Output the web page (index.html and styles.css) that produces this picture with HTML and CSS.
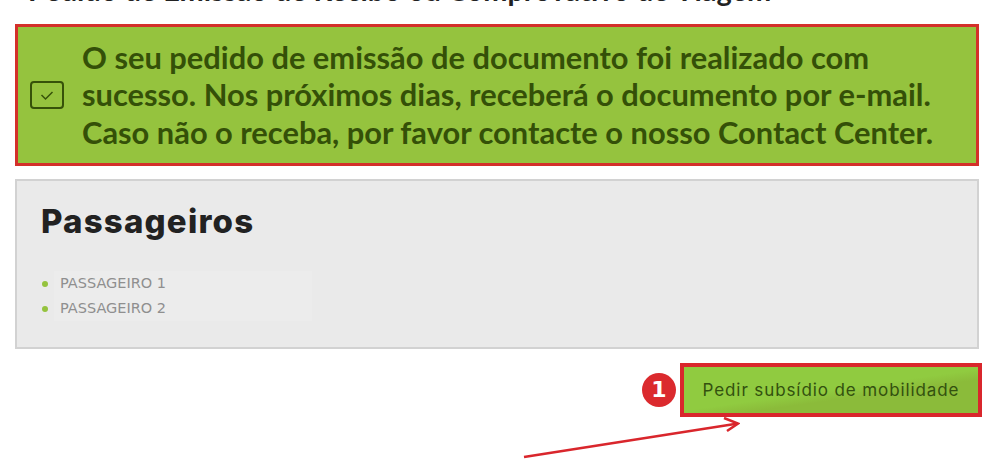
FILE: index.html
```html
<!DOCTYPE html>
<html lang="pt">
<head>
<meta charset="utf-8">
<title>Pedido de emissão</title>
<link rel="stylesheet" href="styles.css">
</head>
<body>
<main class="page">
  <h2 class="cut-title">Pedido de Emissão de Recibo ou Comprovativo de Viagem</h2>
  <div class="alert">
    <svg class="alert-icon" viewBox="0 0 34 28" width="34" height="28" aria-hidden="true">
      <rect x="1" y="1" width="32" height="26" rx="3" fill="none" stroke="#365209" stroke-width="2"/>
      <path d="M11.500 14l4 4 7-7" fill="none" stroke="#365209" stroke-width="1.500"/>
    </svg>
    <p class="alert-text">O seu pedido de emissão de documento foi realizado com sucesso. Nos próximos dias, receberá o documento por e-mail. Caso não o receba, por favor contacte o nosso Contact Center.</p>
  </div>
  <section class="panel">
    <h1 class="panel-title">Passageiros</h1>
    <ul class="passengers">
      <li>PASSAGEIRO 1</li>
      <li>PASSAGEIRO 2</li>
    </ul>
  </section>
  <div class="actions">
    <span class="badge">1</span>
    <a class="button">Pedir subsídio de mobilidade</a>
  </div>
  <svg class="arrow" viewBox="0 0 220 46" width="220" height="46" aria-hidden="true">
    <path d="M4 43L218 9.500" fill="none" stroke="#d9262c" stroke-width="2.500"/>
    <path d="M204 4L218 9.500L207 17" fill="none" stroke="#d9262c" stroke-width="2.500"/>
  </svg>
</main>
</body>
</html>
```
FILE: styles.css
```css
html, body { margin: 0; padding: 0; background: #fff; }
body { width: 1000px; height: 475px; overflow: hidden; }
.page { padding: 0 21px 0 15px; height: 475px; box-sizing: border-box; position: relative; overflow: hidden; }
.cut-title { margin: -23px 0 0 13px; height: 47px; font: 700 28.900px/26px "Lato", sans-serif; color: #222; white-space: nowrap; }
.alert { display: flex; align-items: center; height: 142px; box-sizing: border-box; border: 3px solid #d3302a; background: #95c33e; padding: 0 20px 0 12px; gap: 18px; }
.alert-icon { flex: none; width: 34px; height: 28px; margin-top: -1px; }
.alert-text { margin: 0; font: 700 30.850px/37.500px "Lato", sans-serif; color: #345008; }
.panel { position: relative; z-index: 0; margin-top: 13px; height: 170px; box-sizing: border-box; border: 2px solid #d2d2d2; background: #eaeaea; padding: 18px 24px; }
.panel-title { margin: 0; font: 800 33px/44px "Inter", sans-serif; letter-spacing: 1.200px; color: #222; }
.passengers { list-style: none; margin: 28px 0 0; padding: 0; position: relative; width: 271px; }
.passengers li { position: relative; padding-left: 19px; font: 14.500px/25px "DejaVu Sans", sans-serif; color: #8f8f8f; }
.passengers li::before { content: ""; position: absolute; left: 1px; top: 10px; width: 6px; height: 6px; border-radius: 50%; background: #95c33e; }
.passengers li::after { content: ""; position: absolute; left: 13px; right: 0; top: 0; bottom: 0; background: #ececec; z-index: -1; }
.actions { display: flex; justify-content: flex-end; align-items: center; gap: 4px; margin-top: 14px; margin-right: -3px; }
.badge { width: 34px; height: 34px; border-radius: 50%; background: #db2a2e; color: #fff; font: 700 22px/34px "DejaVu Sans", sans-serif; text-align: center; }
.button { display: block; box-sizing: border-box; width: 302px; height: 54px; border: 4px solid #d9262c; background: linear-gradient(172deg, #90cb40 50%, #8bbb3a 62%); color: #33510f; font: 17px/46px "Inter", sans-serif; letter-spacing: 0.900px; text-align: center; white-space: nowrap; }
.arrow { position: absolute; left: 520px; top: 414px; }
```
